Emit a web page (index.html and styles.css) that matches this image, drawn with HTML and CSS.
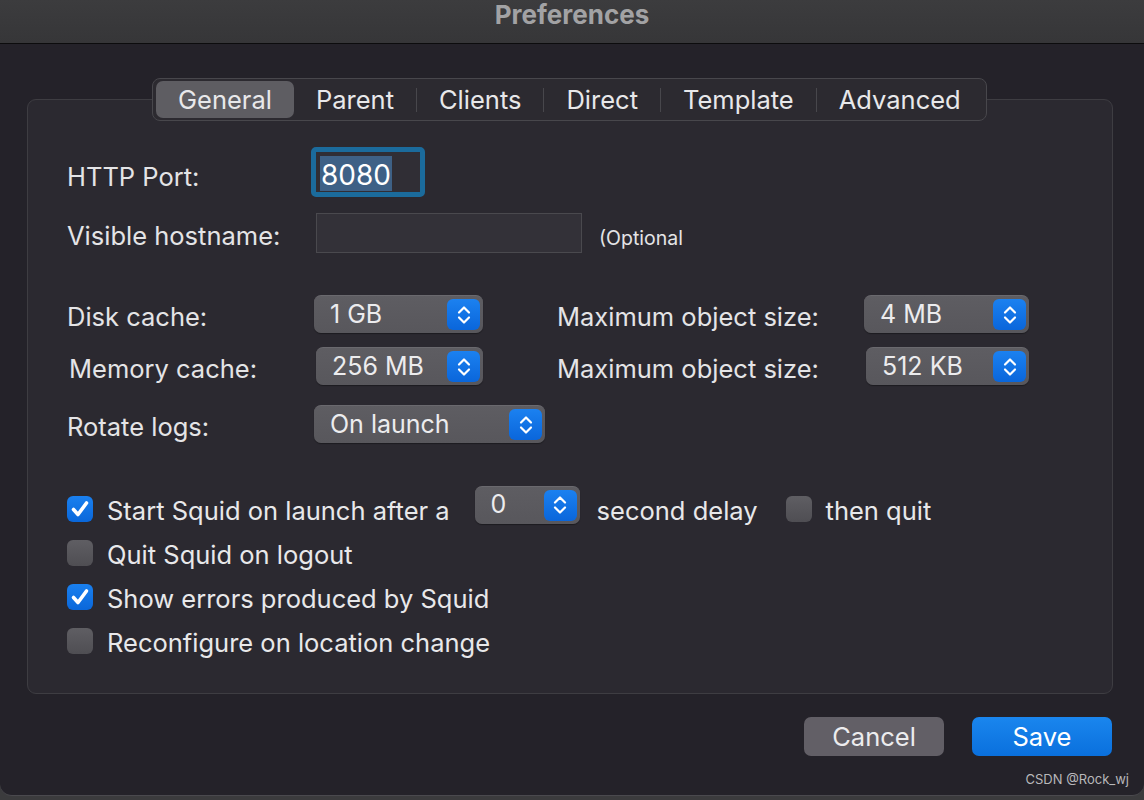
FILE: index.html
```html
<!DOCTYPE html>
<html>
<head>
<title>Preferences</title>
<link rel="stylesheet" href="styles.css">
</head>
<body>
<div class="window">
  <div class="titlebar">Preferences</div>

  <div class="tabs">
    <span class="tab active">General</span>
    <span class="tab">Parent</span>
    <span class="sep"></span>
    <span class="tab">Clients</span>
    <span class="sep"></span>
    <span class="tab">Direct</span>
    <span class="sep"></span>
    <span class="tab">Template</span>
    <span class="sep"></span>
    <span class="tab">Advanced</span>
  </div>

  <div class="group">
    <div class="row row-port">
      <span class="label">HTTP Port:</span>
      <div class="focus-ring"><div class="field field-port"><span class="selected">8080</span></div></div>
    </div>

    <div class="row row-host">
      <span class="label">Visible hostname:</span>
      <div class="field field-host"></div>
      <span class="note">(Optional</span>
    </div>

    <div class="row row-disk">
      <span class="label">Disk cache:</span>
      <div class="popup popup-small"><span>1 GB</span><span class="stepper"><svg viewBox="0 0 18 22" width="18" height="22"><path d="M4 8.5 L9 3.5 L14 8.5 M4 13.5 L9 18.5 L14 13.5" fill="none" stroke="#fff" stroke-width="2.2" stroke-linecap="round" stroke-linejoin="round"/></svg></span></div>
      <span class="label right-label">Maximum object size:</span>
      <div class="popup popup-right"><span>4 MB</span><span class="stepper"><svg viewBox="0 0 18 22" width="18" height="22"><path d="M4 8.5 L9 3.5 L14 8.5 M4 13.5 L9 18.5 L14 13.5" fill="none" stroke="#fff" stroke-width="2.2" stroke-linecap="round" stroke-linejoin="round"/></svg></span></div>
    </div>

    <div class="row row-mem">
      <span class="label nudge">Memory cache:</span>
      <div class="popup popup-small narrow"><span>256 MB</span><span class="stepper"><svg viewBox="0 0 18 22" width="18" height="22"><path d="M4 8.5 L9 3.5 L14 8.5 M4 13.5 L9 18.5 L14 13.5" fill="none" stroke="#fff" stroke-width="2.2" stroke-linecap="round" stroke-linejoin="round"/></svg></span></div>
      <span class="label right-label">Maximum object size:</span>
      <div class="popup popup-right narrow"><span>512 KB</span><span class="stepper"><svg viewBox="0 0 18 22" width="18" height="22"><path d="M4 8.5 L9 3.5 L14 8.5 M4 13.5 L9 18.5 L14 13.5" fill="none" stroke="#fff" stroke-width="2.2" stroke-linecap="round" stroke-linejoin="round"/></svg></span></div>
    </div>

    <div class="row row-logs">
      <span class="label">Rotate logs:</span>
      <div class="popup popup-wide"><span>On launch</span><span class="stepper"><svg viewBox="0 0 18 22" width="18" height="22"><path d="M4 8.5 L9 3.5 L14 8.5 M4 13.5 L9 18.5 L14 13.5" fill="none" stroke="#fff" stroke-width="2.2" stroke-linecap="round" stroke-linejoin="round"/></svg></span></div>
    </div>

    <div class="checks">
      <div class="check-row">
        <span class="box checked"><svg viewBox="0 0 26 26" width="26" height="26"><path d="M6.5 13.5 L11 18.5 L19.5 7" fill="none" stroke="#fff" stroke-width="3.6" stroke-linecap="round" stroke-linejoin="round"/></svg></span>
        <span class="check-text">Start Squid on launch after a</span>
        <div class="popup popup-delay"><span>0</span><span class="stepper"><svg viewBox="0 0 18 22" width="18" height="22"><path d="M4 8.5 L9 3.5 L14 8.5 M4 13.5 L9 18.5 L14 13.5" fill="none" stroke="#fff" stroke-width="2.2" stroke-linecap="round" stroke-linejoin="round"/></svg></span></div>
        <span class="check-text delay-text">second delay</span>
        <span class="box"></span>
        <span class="check-text">then quit</span>
      </div>
      <div class="check-row">
        <span class="box"></span>
        <span class="check-text">Quit Squid on logout</span>
      </div>
      <div class="check-row">
        <span class="box checked"><svg viewBox="0 0 26 26" width="26" height="26"><path d="M6.5 13.5 L11 18.5 L19.5 7" fill="none" stroke="#fff" stroke-width="3.6" stroke-linecap="round" stroke-linejoin="round"/></svg></span>
        <span class="check-text">Show errors produced by Squid</span>
      </div>
      <div class="check-row">
        <span class="box"></span>
        <span class="check-text">Reconfigure on location change</span>
      </div>
    </div>
  </div>

  <div class="buttons">
    <button class="button cancel">Cancel</button>
    <button class="button save">Save</button>
  </div>

  <div class="watermark">CSDN @Rock_wj</div>
</div>
</body>
</html>
```

FILE: styles.css
```css
body {
  margin: 0;
  padding: 0;
  width: 1144px;
  height: 800px;
  overflow: hidden;
  background-color: #3b3b3d;
  font-family: Inter, "Liberation Sans", sans-serif;
  color: #e4e4e6;
}

.window {
  height: 795px;
  background-color: #242229;
  border-radius: 0 0 12px 12px;
  border-bottom: 1px solid #4a494e;
  overflow: hidden;
}

.titlebar {
  height: 44px;
  line-height: 30px;
  background: linear-gradient(#3c3c3e, #363638);
  border-bottom: 1px solid #0c0c0d;
  text-align: center;
  font-size: 26px;
  font-weight: 700;
  color: #a2a2a4;
  box-sizing: border-box;
}

.tabs {
  display: flex;
  align-items: center;
  width: fit-content;
  height: 43px;
  margin: 34px auto -22px 152px;
  padding: 0 3px;
  box-sizing: border-box;
  background-color: #2c2a30;
  border: 1px solid #48474c;
  border-radius: 8px;
  position: relative;
  z-index: 1;
}

.tab {
  height: 37px;
  line-height: 37px;
  padding: 0 22px;
  font-size: 25.5px;
  color: #e8e8ea;
  border-radius: 7px;
}

.tab.active {
  background-color: #5e5d62;
}

.sep {
  width: 1px;
  height: 24px;
  background-color: #48474c;
}

.group {
  margin-left: 27px;
  width: 1086px;
  height: 595px;
  box-sizing: border-box;
  background-color: #2b2930;
  border: 1px solid #3e3d42;
  border-radius: 9px;
  padding: 47px 0 0 39px;
}

.row {
  display: flex;
  align-items: center;
  height: 40px;
}

.row-port { height: 50px; }
.row-host { margin-top: 16px; }
.row-disk { margin-top: 42px; height: 38px; }
.row-mem { margin-top: 14px; height: 38px; }
.row-logs { margin-top: 20px; height: 38px; }

.label {
  width: 247px;
  margin-top: 5px;
  font-size: 25.5px;
  color: #e4e4e6;
  flex-shrink: 0;
}

.row-port .label { width: 244px; margin-top: 8px; }
.row-host .label { width: 249px; }

.nudge { margin-left: 2px; width: 247px; }

.right-label {
  width: 307px;
  margin-left: 74px;
}

.focus-ring {
  width: 114px;
  height: 50px;
  box-sizing: border-box;
  border: 4px solid #1b6b9c;
  border-radius: 5px;
  background-color: #1b6b9c;
}

.field {
  box-sizing: border-box;
  background-color: #333138;
  border: 1px solid #4a494e;
}

.field-port {
  height: 42px;
  width: 106px;
  background-color: #302e35;
  border-color: #1b6b9c;
  display: flex;
  align-items: flex-end;
  padding: 0 0 1px 4px;
}

.selected {
  background-color: #3e6186;
  font-size: 28px;
  line-height: 32px;
  padding: 3px 1px 0;
  color: #ffffff;
}

.field-host {
  width: 266px;
  height: 40px;
}

.note {
  margin-left: 17px;
  margin-top: 10px;
  font-size: 19.5px;
  color: #e4e4e6;
}

.popup {
  display: flex;
  align-items: center;
  justify-content: space-between;
  box-sizing: border-box;
  height: 38px;
  padding: 0 3px 0 16px;
  background: linear-gradient(#5e5d62, #58575c);
  border-top: 1px solid #6a696e;
  border-radius: 7px;
  box-shadow: 0 1px 1px rgba(0, 0, 0, 0.35);
  font-size: 25px;
  color: #ececee;
  flex-shrink: 0;
}

.popup span:first-child {
  margin-top: -2px;
}

.popup-small { width: 169px; }
.popup-small.narrow { width: 167px; }
.popup-right { width: 165px; }
.popup-right.narrow { width: 163px; margin-left: 2px; }
.popup-wide { width: 231px; }
.popup-delay { width: 105px; padding-left: 16px; }

.stepper {
  display: flex;
  align-items: center;
  justify-content: center;
  width: 33px;
  height: 31px;
  border-radius: 6px;
  background: linear-gradient(#1b81f0, #0a66db);
}

.checks {
  margin-top: 44px;
}

.check-row {
  display: flex;
  align-items: center;
  height: 44px;
}

.box {
  width: 26px;
  height: 26px;
  border-radius: 6px;
  background: linear-gradient(#5f5e63, #4f4e53);
  flex-shrink: 0;
  display: flex;
}

.box.checked {
  background: linear-gradient(#1a80ef, #0a67da);
}

.check-text {
  margin-left: 14px;
  font-size: 25.5px;
  color: #e8e8ea;
  margin-top: 3px;
}

.check-row .popup-delay {
  margin-left: 25px;
  margin-top: -9px;
}

.delay-text {
  margin-left: 17px;
  margin-right: 28px;
}

.buttons {
  display: flex;
  justify-content: flex-end;
  gap: 28px;
  margin: 23px 32px 0 0;
}

.button {
  width: 140px;
  height: 39px;
  border: none;
  border-radius: 7px;
  font-family: Inter, "Liberation Sans", sans-serif;
  font-size: 25.5px;
  color: #ececee;
  padding: 0;
}

.cancel {
  background-color: #625f66;
}

.save {
  background: linear-gradient(#1a86ee, #0a70dd);
  color: #ffffff;
}

.watermark {
  text-align: right;
  margin: 15px 15px 0 0;
  font-size: 13px;
  color: #b8b8ba;
}
```
